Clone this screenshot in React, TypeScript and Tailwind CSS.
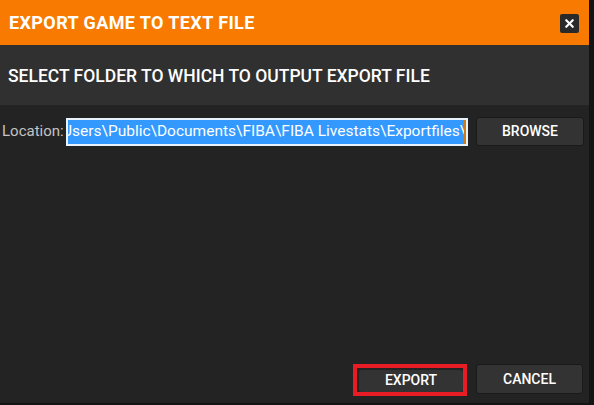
import { X } from 'lucide-react';

export default function App() {
    return (
        <div className="flex h-[405px] w-[594px] bg-[#141414] overflow-hidden" style={{ fontFamily: 'Roboto, "Liberation Sans", sans-serif' }}>
            <div className="flex flex-col w-[589px] h-[403px] bg-[#232323]">
                {/* title bar */}
                <div className="flex items-center justify-between h-[45px] bg-[#f97a00] pl-[9px] pr-[10px]">
                    <span className="text-[18px] font-bold text-white tracking-[0.4px]">EXPORT GAME TO TEXT FILE</span>
                    <button className="flex items-center justify-center w-[19px] h-[19px] rounded-[2px] bg-[#2a2a2a] mt-[1px]">
                        <X className="w-[13px] h-[13px] text-white" strokeWidth={4} />
                    </button>
                </div>

                <div className="flex items-center h-[60px] bg-[#303030] pl-[8px]">
                    <span className="text-[17.5px] font-medium text-white pt-[3px]">SELECT FOLDER TO WHICH TO OUTPUT EXPORT FILE</span>
                </div>

                <div className="flex items-center gap-[4px] pl-[2px] pt-[12px]">
                    <span className="text-[15px] text-[#c4c4c4] w-[60px]">Location:</span>
                    <div className="flex items-center w-[402px] h-[28px] border-2 border-[#e9f2fb] overflow-hidden bg-white">
                        <div className="flex items-center h-full w-full bg-[#3399ff] overflow-hidden">
                            <span className="text-[15.5px] text-white whitespace-nowrap ml-[-6px]">Users\Public\Documents\FIBA\FIBA Livestats\Exportfiles\</span>
                        </div>
                        <span className="w-[2px] h-full bg-[#d07a10] shrink-0" />
                    </div>
                    <button className="ml-[4px] w-[108px] h-[29px] rounded-[3px] bg-[#333333] border border-[#1a1a1a] text-[14px] font-medium text-white">
                        BROWSE
                    </button>
                </div>

                <div className="flex-1" />

                <div className="flex justify-end gap-[9px] pr-[6px] pb-[7px]">
                    <div className="border-[4px] border-[#e81c24] pl-[2px]">
                        <button className="w-[104px] h-[22px] rounded-[3px] bg-[#333333] text-[14px] font-medium text-white">
                            EXPORT
                        </button>
                    </div>
                    <button className="w-[107px] h-[30px] rounded-[3px] bg-[#333333] border border-[#1a1a1a] text-[14px] font-medium text-white">
                        CANCEL
                    </button>
                </div>
            </div>
        </div>
    );
}
